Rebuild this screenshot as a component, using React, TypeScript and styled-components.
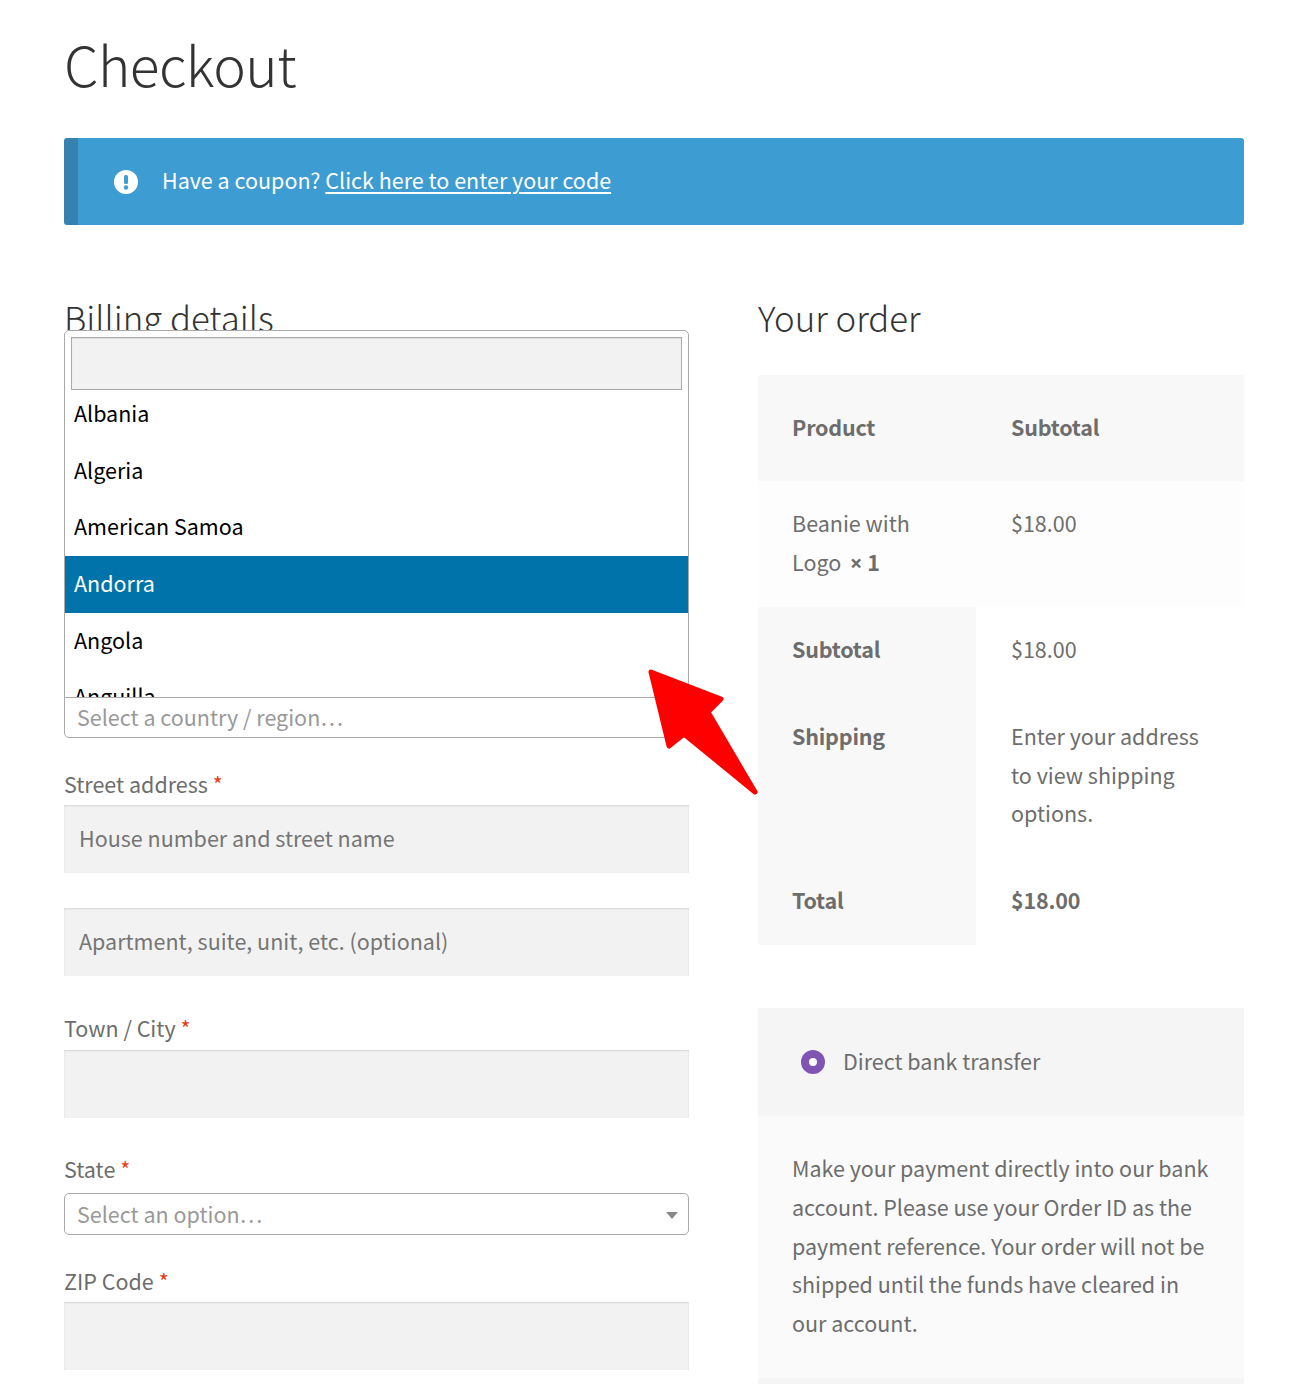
import styled, { createGlobalStyle } from 'styled-components'

const FONT = '"Noto Sans CJK SC", "Noto Sans", sans-serif'

const GlobalStyle = createGlobalStyle`
  html, body {
    margin: 0;
    padding: 0;
    background: #fff;
  }
  body {
    font-family: ${FONT};
    font-size: 21.5px;
    color: #6d6d6d;
  }
`

const Page = styled.div`
  width: 1304px;
  height: 1384px;
  overflow: hidden;
  position: relative;
  box-sizing: border-box;
  padding: 0 60px 0 64px;
`

const Title = styled.h1`
  margin: 0;
  padding-top: 23px;
  height: 138px;
  box-sizing: border-box;
  font-size: 55px;
  line-height: 80px;
  font-weight: 300;
  color: #333;
  letter-spacing: -0.5px;
`

const Notice = styled.div`
  height: 87px;
  box-sizing: border-box;
  display: flex;
  align-items: center;
  gap: 24px;
  padding-left: 36px;
  background: #3d9cd2;
  border-left: 14px solid #3582b1;
  border-radius: 3px;
  color: #fff;
  a {
    color: #fff;
    text-decoration: underline;
    text-decoration-thickness: 2px;
    text-underline-offset: 3px;
  }
`

const NoticeText = styled.span`
  padding-bottom: 4px;
`

const Columns = styled.div`
  display: grid;
  grid-template-columns: 625px 486px;
  column-gap: 69px;
  padding-top: 70px;
`

const Column = styled.div`
  display: flex;
  flex-direction: column;
`

const Heading = styled.h3`
  margin: 0;
  height: 80px;
  font-size: 34.8px;
  line-height: 44px;
  font-weight: 300;
  color: #333;
`

const CountryField = styled.div`
  position: relative;
  margin-top: 321px;
  height: 42px;
  box-sizing: border-box;
  border: 1px solid #aaa;
  border-radius: 0 0 5px 5px;
  padding-left: 12px;
  color: #999;
  line-height: 40px;
  margin-bottom: 27px;
`

const Popup = styled.div`
  position: absolute;
  left: -1px;
  right: -1px;
  bottom: 100%;
  margin-bottom: -1px;
  height: 368px;
  box-sizing: border-box;
  background: #fff;
  border: 1px solid #aaa;
  border-radius: 5px 5px 0 0;
  overflow: hidden;
  padding: 6px 6px 0;
`

const SearchBox = styled.div`
  height: 53px;
  box-sizing: border-box;
  background: #f2f2f2;
  border: 1px solid #aaa;
  box-shadow: inset 0 1px 1px rgba(0, 0, 0, 0.08);
`

const OptionList = styled.ul`
  list-style: none;
  margin: -4px -6px 0;
  padding: 0;
`

const Option = styled.li<{ $active?: boolean }>`
  height: 56.7px;
  line-height: 53px;
  padding-left: 9px;
  color: ${(p) => (p.$active ? '#fff' : '#000')};
  background: ${(p) => (p.$active ? '#0073aa' : 'transparent')};
`

const Field = styled.div<{ $gap?: number }>`
  display: flex;
  flex-direction: column;
  margin-bottom: ${(p) => p.$gap ?? 34.5}px;
`

const Label = styled.label<{ $line?: number }>`
  display: block;
  height: 40px;
  line-height: ${(p) => p.$line ?? 36}px;
  white-space: nowrap;
  abbr {
    color: #e2401c;
    margin-left: 5px;
    text-decoration: none;
  }
`

const TextInput = styled.div`
  height: 67.5px;
  box-sizing: border-box;
  background: #f2f2f2;
  padding-left: 15px;
  line-height: 65px;
  color: #757575;
  box-shadow: inset 0 1px 2px rgba(0, 0, 0, 0.12);
`

const SelectBox = styled.div`
  height: 42px;
  box-sizing: border-box;
  border: 1px solid #aaa;
  border-radius: 5px;
  background: #fff;
  padding-left: 12px;
  line-height: 40px;
  color: #999;
  position: relative;
  margin-top: 1px;
  &::after {
    content: '';
    position: absolute;
    right: 10px;
    top: 18px;
    border-left: 6px solid transparent;
    border-right: 6px solid transparent;
    border-top: 7px solid #888;
  }
`

const OrderTable = styled.table`
  width: 486px;
  border-collapse: collapse;
  table-layout: fixed;
  margin-bottom: 63px;
  th, td {
    text-align: left;
    vertical-align: top;
    padding: 0 34px;
    line-height: 38.6px;
  }
  th {
    font-weight: 700;
    letter-spacing: -0.2px;
  }
  tr > :nth-child(2) {
    padding-left: 35px;
  }
`

const HeadRow = styled.tr`
  height: 106px;
  background: #f8f8f8;
  th {
    vertical-align: middle;
    padding-bottom: 2px;
  }
`

const BodyRow = styled.tr`
  background: #fdfdfd;
  td { padding-top: 23px; padding-bottom: 25px; }
`

const FootRow = styled.tr<{ $h: number }>`
  height: ${(p) => p.$h}px;
  th { background: #f8f8f8; padding-top: 23px; }
  td { padding-top: 23px; }
`

const Qty = styled.strong`
  font-weight: 700;
  margin-left: 4px;
`

const QtySign = styled.span`
  font-family: "Noto Sans", sans-serif;
`

const TotalPrice = styled.strong`
  font-weight: 700;
  letter-spacing: -0.2px;
`

const PaymentHead = styled.div`
  height: 108px;
  flex-shrink: 0;
  display: flex;
  align-items: center;
  gap: 18px;
  padding-left: 43px;
  background: #f5f5f5;
`

const PaymentLabel = styled.span`
  padding-bottom: 4px;
`

const Radio = styled.span`
  width: 24px;
  height: 24px;
  box-sizing: border-box;
  border-radius: 50%;
  background: #fff;
  border: 8px solid #7f54b3;
`

const PaymentBody = styled.div`
  background: #fafafa;
  padding: 33px 34px 0;
  line-height: 38.7px;
  height: 262px;
  box-sizing: border-box;
`

const Arrow = styled.svg`
  position: absolute;
  left: 640px;
  top: 660px;
`

export default function App() {
  return (
    <>
      <GlobalStyle />
      <Page>
        <Title>Checkout</Title>
        <Notice>
          <svg width="24" height="24" viewBox="0 0 24 24">
            <circle cx="12" cy="12" r="12" fill="#fff" />
            <rect x="10" y="5" width="4" height="9" rx="1.5" fill="#3d9cd2" />
            <circle cx="12" cy="17.5" r="2.2" fill="#3d9cd2" />
          </svg>
          <NoticeText>
            Have a coupon? <a href="#coupon">Click here to enter your code</a>
          </NoticeText>
        </Notice>
        <Columns>
          <Column>
            <Heading>Billing details</Heading>
            <CountryField>
              Select a country / region…
              <Popup>
                <SearchBox />
                <OptionList>
                  <Option>Albania</Option>
                  <Option>Algeria</Option>
                  <Option>American Samoa</Option>
                  <Option $active>Andorra</Option>
                  <Option>Angola</Option>
                  <Option>Anguilla</Option>
                </OptionList>
              </Popup>
            </CountryField>
            <Field $gap={35.5}>
              <Label $line={38}>Street address<abbr>*</abbr></Label>
              <TextInput>House number and street name</TextInput>
            </Field>
            <Field>
              <TextInput>Apartment, suite, unit, etc. (optional)</TextInput>
            </Field>
            <Field>
              <Label>Town / City<abbr>*</abbr></Label>
              <TextInput />
            </Field>
            <Field $gap={27}>
              <Label $line={34}>State<abbr>*</abbr></Label>
              <SelectBox>Select an option…</SelectBox>
            </Field>
            <Field>
              <Label $line={38}>ZIP Code<abbr>*</abbr></Label>
              <TextInput />
            </Field>
          </Column>
          <Column>
            <Heading>Your order</Heading>
            <OrderTable>
              <colgroup>
                <col width="218" />
                <col />
              </colgroup>
              <thead>
                <HeadRow>
                  <th>Product</th>
                  <th>Subtotal</th>
                </HeadRow>
              </thead>
              <tbody>
                <BodyRow>
                  <td>
                    Beanie with Logo <Qty><QtySign>×</QtySign> 1</Qty>
                  </td>
                  <td>$18.00</td>
                </BodyRow>
              </tbody>
              <tfoot>
                <FootRow $h={87}>
                  <th>Subtotal</th>
                  <td>$18.00</td>
                </FootRow>
                <FootRow $h={164}>
                  <th>Shipping</th>
                  <td>Enter your address to view shipping options.</td>
                </FootRow>
                <FootRow $h={87}>
                  <th>Total</th>
                  <td><TotalPrice>$18.00</TotalPrice></td>
                </FootRow>
              </tfoot>
            </OrderTable>
            <PaymentHead>
              <Radio />
              <PaymentLabel>Direct bank transfer</PaymentLabel>
            </PaymentHead>
            <PaymentBody>
              Make your payment directly into our bank account. Please use your Order ID as the payment reference. Your order will not be shipped until the funds have cleared in our account.
            </PaymentBody>
            <PaymentHead />
          </Column>
        </Columns>
        <Arrow width="120" height="140" viewBox="0 0 120 140">
          <path
            d="M11 12 L81 39 L68 52 L115 132 L44 74 L29 86 Z"
            fill="#ff0000"
            stroke="#ff0000"
            strokeWidth="5"
            strokeLinejoin="round"
          />
        </Arrow>
      </Page>
    </>
  )
}
